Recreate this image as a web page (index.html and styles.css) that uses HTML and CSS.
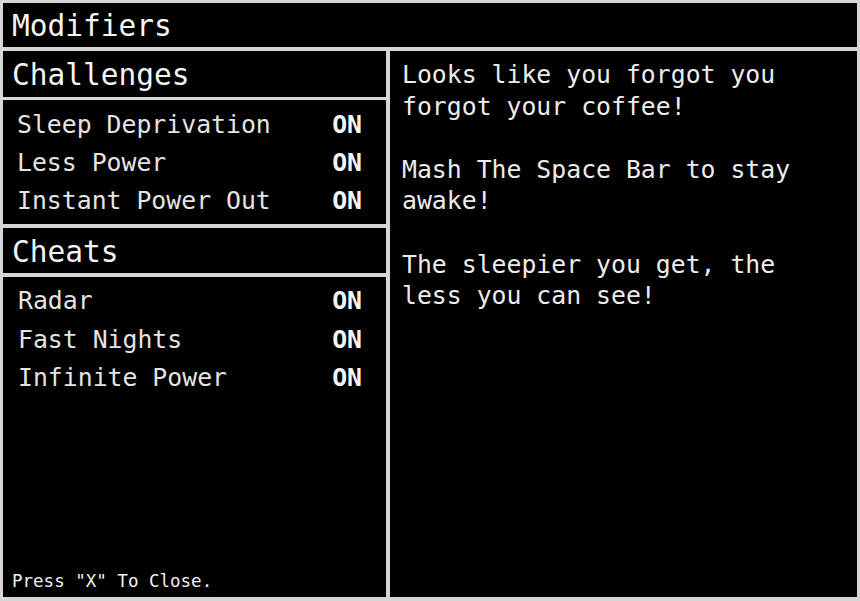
FILE: index.html
```html
<!DOCTYPE html>
<html>
<head>
<meta charset="utf-8">
<link rel="stylesheet" href="styles.css">
</head>
<body>
<div class="window">
  <div class="titlebar">Modifiers</div>
  <div class="columns">
    <div class="left">
      <div class="header h-challenges">Challenges</div>
      <div class="list list-challenges">
        <div class="row"><span>Sleep Deprivation</span><span class="on">ON</span></div>
        <div class="row"><span>Less Power</span><span class="on">ON</span></div>
        <div class="row"><span>Instant Power Out</span><span class="on">ON</span></div>
      </div>
      <div class="header h-cheats">Cheats</div>
      <div class="list list-cheats">
        <div class="row"><span>Radar</span><span class="on">ON</span></div>
        <div class="row"><span>Fast Nights</span><span class="on">ON</span></div>
        <div class="row"><span>Infinite Power</span><span class="on">ON</span></div>
        <div class="footer">Press "X" To Close.</div>
      </div>
    </div>
    <div class="right">
      <p>Looks like you forgot you forgot your coffee!</p>
      <p>Mash The Space Bar to stay awake!</p>
      <p>The sleepier you get, the less you can see!</p>
    </div>
  </div>
</div>
</body>
</html>
```

FILE: styles.css
```css
html, body {
  margin: 0;
  padding: 0;
}
body {
  width: 860px;
  height: 601px;
  background: #d6d6d6;
  font-family: "DejaVu Sans Mono", "Liberation Mono", monospace;
  color: #ececec;
  overflow: hidden;
}
.window {
  box-sizing: border-box;
  width: 860px;
  height: 601px;
  padding: 3px 3px 4px 3px;
  display: grid;
  grid-template-rows: 44px 1fr;
  row-gap: 4px;
}
.titlebar {
  background: #000;
  font-size: 29.5px;
  line-height: 42px;
  padding-top: 2px;
  padding-left: 9px;
  color: #f4f4f4;
}
.columns {
  display: grid;
  grid-template-columns: 383px 1fr;
  column-gap: 4px;
  min-height: 0;
}
.left {
  display: flex;
  flex-direction: column;
  min-height: 0;
}
.header {
  background: #000;
  font-size: 29.5px;
  padding-left: 9px;
  color: #f4f4f4;
  box-sizing: border-box;
  padding-top: 2px;
}
.h-challenges {
  height: 46px;
  line-height: 44px;
  margin-bottom: 3px;
}
.h-cheats {
  height: 45px;
  line-height: 43px;
  padding-top: 3px;
  margin-top: 4px;
  margin-bottom: 4px;
}
.list {
  background: #000;
  font-size: 24.8px;
  color: #e4e4e4;
}
.list-challenges {
  height: 124px;
  box-sizing: border-box;
  padding: 6px 24px 4px 14px;
}
.list-cheats {
  flex: 1;
  display: flex;
  flex-direction: column;
  padding: 5px 24px 6px 15px;
}
.row {
  display: flex;
  justify-content: space-between;
  height: 38px;
  line-height: 38px;
}
.list-cheats .row {
  height: 38.5px;
  line-height: 38.5px;
}
.on {
  font-weight: bold;
  color: #f4f4f4;
}
.footer {
  margin-top: auto;
  margin-left: -6px;
  font-size: 17.5px;
  line-height: 20px;
  color: #f0f0f0;
}
.right {
  background: #000;
  padding: 8px 30px 0 12px;
  font-size: 24.8px;
  line-height: 31.6px;
  color: #ececec;
}
.right p {
  margin: 0 0 31.6px 0;
}
```
